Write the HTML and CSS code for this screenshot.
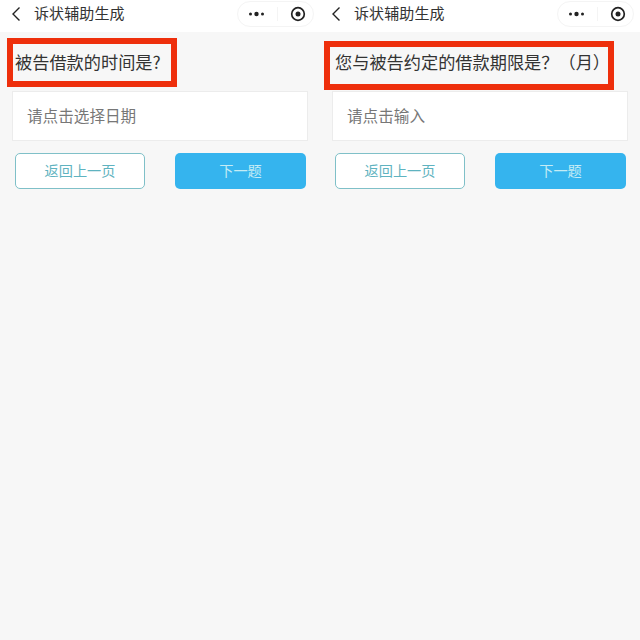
FILE: index.html
```html
<!DOCTYPE html>
<html lang="zh-CN">
<head>
    <meta charset="UTF-8">
    <title>诉状辅助生成</title>
    <link rel="stylesheet" href="styles.css">
</head>
<body>
    <div class="container">
        <div class="screen">
            <div class="navbar">
                <svg class="back" width="10" height="16" viewBox="0 0 10 16"><path d="M8.5 1.5 L2 8 L8.5 14.5" fill="none" stroke="#222" stroke-width="1.4"/></svg>
                <div class="nav-title">诉状辅助生成</div>
                <div class="capsule">
                    <svg width="17" height="6" viewBox="0 0 17 6"><circle cx="2.5" cy="3" r="1.5" fill="#222"/><circle cx="8.5" cy="3" r="2.2" fill="#222"/><circle cx="14.5" cy="3" r="1.5" fill="#222"/></svg>
                    <span class="capsule-line"></span>
                    <svg width="16" height="16" viewBox="0 0 16 16"><circle cx="8" cy="8" r="6.3" fill="none" stroke="#222" stroke-width="1.7"/><circle cx="8" cy="8" r="2.5" fill="#222"/></svg>
                </div>
            </div>
            <div class="question">
                <span class="mark mark-left"></span>
                被告借款的时间是?
            </div>
            <div class="field">请点击选择日期</div>
            <div class="buttons">
                <button class="btn-back">返回上一页</button>
                <button class="btn-next">下一题</button>
            </div>
        </div>
        <div class="screen">
            <div class="navbar">
                <svg class="back" width="10" height="16" viewBox="0 0 10 16"><path d="M8.5 1.5 L2 8 L8.5 14.5" fill="none" stroke="#222" stroke-width="1.4"/></svg>
                <div class="nav-title">诉状辅助生成</div>
                <div class="capsule">
                    <svg width="17" height="6" viewBox="0 0 17 6"><circle cx="2.5" cy="3" r="1.5" fill="#222"/><circle cx="8.5" cy="3" r="2.2" fill="#222"/><circle cx="14.5" cy="3" r="1.5" fill="#222"/></svg>
                    <span class="capsule-line"></span>
                    <svg width="16" height="16" viewBox="0 0 16 16"><circle cx="8" cy="8" r="6.3" fill="none" stroke="#222" stroke-width="1.7"/><circle cx="8" cy="8" r="2.5" fill="#222"/></svg>
                </div>
            </div>
            <div class="question">
                <span class="mark mark-right"></span>
                您与被告约定的借款期限是？（月）
            </div>
            <div class="field">请点击输入</div>
            <div class="buttons">
                <button class="btn-back">返回上一页</button>
                <button class="btn-next">下一题</button>
            </div>
        </div>
    </div>
</body>
</html>
```

FILE: styles.css
```css
body {
    margin: 0;
    font-family: "Noto Sans CJK SC", "Liberation Sans", sans-serif;
    background-color: #f7f7f7;
}
.container {
    display: flex;
    height: 640px;
    overflow: hidden;
}
.screen {
    width: 320px;
    flex-shrink: 0;
}
.navbar {
    display: flex;
    align-items: center;
    height: 32px;
    padding: 0 6px 4px 11px;
    box-sizing: border-box;
    background-color: #fff;
}
.nav-title {
    flex: 1;
    margin: 0 0 4px 13px;
    font-size: 15px;
    letter-spacing: 0.1px;
    color: #333;
}
.capsule {
    display: flex;
    align-items: center;
    justify-content: space-between;
    width: 77px;
    height: 26px;
    padding: 0 7px 0 10px;
    box-sizing: border-box;
    border: 1px solid #f4f4f4;
    border-radius: 13px;
}
.capsule-line {
    width: 1px;
    height: 14px;
    background-color: #f4f4f4;
}
.question {
    position: relative;
    height: 59px;
    padding-left: 15px;
    font-size: 17.2px;
    line-height: 60px;
    color: #333;
}
.mark {
    position: absolute;
    border: 6px solid #ee2f0c;
    box-sizing: border-box;
}
.mark-left {
    left: 7px;
    top: 6px;
    width: 170px;
    height: 49px;
}
.mark-right {
    left: 4px;
    top: 9px;
    width: 290px;
    height: 49px;
}
.field {
    height: 50px;
    margin: 0 12px;
    padding-left: 14px;
    box-sizing: border-box;
    background-color: #fff;
    border: 1px solid #ececec;
    font-size: 15.6px;
    line-height: 46px;
    color: #777;
}
.buttons {
    display: flex;
    justify-content: space-between;
    margin: 12px 14px 0 15px;
}
.buttons button {
    height: 36px;
    padding: 0 0 2px;
    border-radius: 5px;
    font-family: inherit;
    font-size: 14.2px;
}
.btn-back {
    width: 130px;
    background-color: #fff;
    border: 1.5px solid #7fc0c8;
    color: #5fb3c0;
}
.btn-next {
    width: 131px;
    background-color: #35b4ee;
    border: none;
    color: #c5ecf5;
}
```
